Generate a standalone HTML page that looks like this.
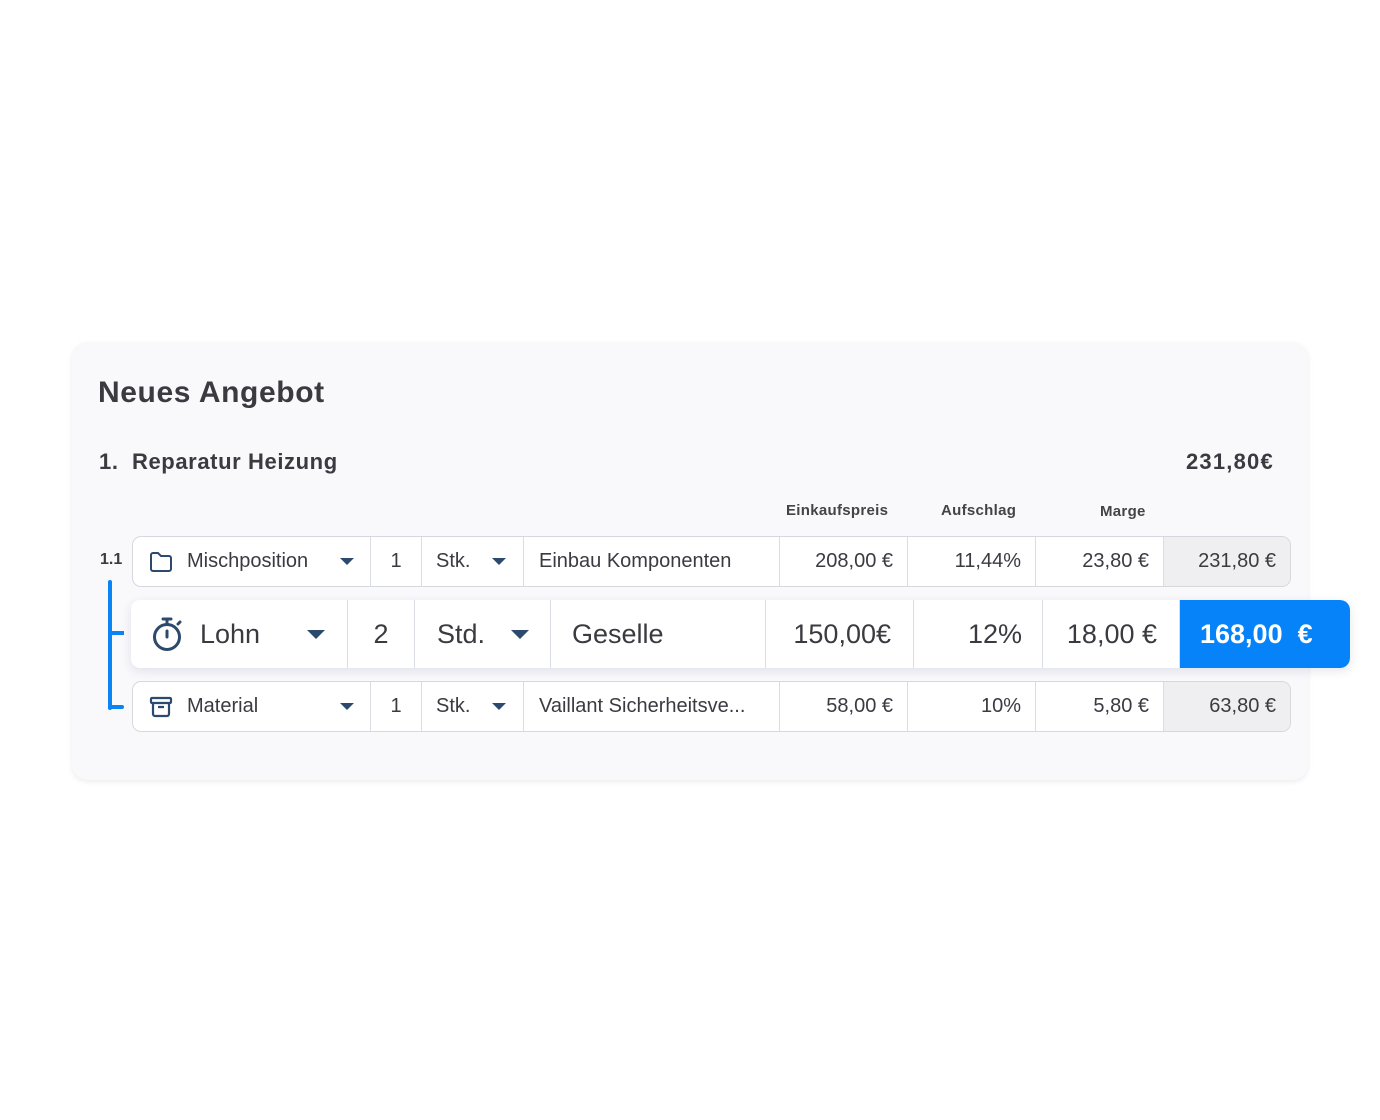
<!DOCTYPE html>
<html><head><meta charset="utf-8"><style>
*{box-sizing:border-box;margin:0;padding:0}
body{width:1380px;height:1120px;background:#fff;font-family:"Liberation Sans",sans-serif;color:#3a3a40;position:relative;overflow:hidden}
.card{position:absolute;left:72px;top:342px;width:1236px;height:438px;background:#f9f9fc;border-radius:16px;box-shadow:0 2px 6px rgba(0,0,0,.08)}
.abs{position:absolute;white-space:nowrap}
.row{position:absolute;display:flex;background:#fff;border:1px solid #d6d8e0;border-radius:9px;overflow:hidden}
.row>div{border-right:1px solid #dcdde4;display:flex;align-items:center;height:100%;position:relative}
.row>div:last-child{border-right:none}
.r{justify-content:flex-end;padding-right:14px}
.tri{position:absolute;width:0;height:0;border-left:7px solid transparent;border-right:7px solid transparent;border-top:7px solid #2c4a6e}
</style></head><body>
<div class="card"></div>
<div class="abs" style="left:98px;top:376px;font-size:30px;font-weight:bold;color:#3a3a40;letter-spacing:0.6px">Neues Angebot</div>
<div class="abs" style="left:99px;top:449px;font-size:22px;font-weight:bold;letter-spacing:0.6px">1.&nbsp; Reparatur Heizung</div>
<div class="abs" style="left:1186px;top:449px;font-size:22px;font-weight:bold;letter-spacing:1.2px">231,80€</div>
<div class="abs" style="left:786px;top:502px;font-size:15px;font-weight:bold;color:#444;letter-spacing:0.3px">Einkaufspreis</div>
<div class="abs" style="left:941px;top:502px;font-size:15px;font-weight:bold;color:#444;letter-spacing:0.3px">Aufschlag</div>
<div class="abs" style="left:1100px;top:503px;font-size:15px;font-weight:bold;color:#444;letter-spacing:0.3px">Marge</div>
<div class="abs" style="left:100px;top:551px;font-size:16px;font-weight:bold">1.1</div>
<div class="abs" style="left:108px;top:580px;width:4px;height:130px;background:#0a84f5;border-radius:2px"></div>
<div class="abs" style="left:108px;top:631px;width:16px;height:4px;background:#0a84f5"></div>
<div class="abs" style="left:108px;top:705px;width:16px;height:4px;background:#0a84f5;border-radius:2px"></div>

<div class="row" style="left:132px;top:536px;width:1159px;height:51px;font-size:20px">
<div style="width:238px;padding-left:16px"><svg width="24" height="22" viewBox="0 0 24 22" fill="none" stroke="#2c4a6e" stroke-width="2"><path d="M2 4a2 2 0 0 1 2-2h5l3 3h8a2 2 0 0 1 2 2v11a2 2 0 0 1-2 2H4a2 2 0 0 1-2-2z"/></svg><span style="margin-left:14px">Mischposition</span><i class="tri" style="left:207px;top:21px"></i></div>
<div style="width:51px;justify-content:center">1</div>
<div style="width:102px;padding-left:14px">Stk.<i class="tri" style="left:70px;top:21px"></i></div>
<div style="width:256px;padding-left:15px">Einbau Komponenten</div>
<div class="r" style="width:128px">208,00 €</div>
<div class="r" style="width:128px">11,44%</div>
<div class="r" style="width:128px">23,80 €</div>
<div class="r" style="flex:1;background:#efeff2">231,80 €</div>
</div>

<div class="row" style="left:131px;top:600px;width:1219px;height:68px;font-size:27px;border:none;box-shadow:0 3px 10px rgba(40,50,90,.12)">
<div style="width:217px;padding-left:20px"><svg width="34" height="36" viewBox="0 0 34 36" fill="none" stroke="#2c4a6e" stroke-width="3" stroke-linecap="round"><circle cx="16" cy="21" r="12.5"/><path d="M16 15v6M12 3h8M16 3v5M27 8l2-2"/></svg><span style="margin-left:15px">Lohn</span><i class="tri" style="left:176px;top:30px;border-width:9px 9px 0 9px"></i></div>
<div style="width:67px;justify-content:center">2</div>
<div style="width:136px;padding-left:22px">Std.<i class="tri" style="left:96px;top:30px;border-width:9px 9px 0 9px"></i></div>
<div style="width:215px;padding-left:21px">Geselle</div>
<div class="r" style="width:148px;padding-right:22px">150,00€</div>
<div class="r" style="width:129px;padding-right:20px">12%</div>
<div class="r" style="width:137px;padding-right:22px">18,00 €</div>
<div style="flex:1;background:#0683f9;color:#fff;font-weight:bold;padding-left:20px;border-radius:0 10px 10px 0">168,00&nbsp;&nbsp;€</div>
</div>

<div class="row" style="left:132px;top:681px;width:1159px;height:51px;font-size:20px">
<div style="width:238px;padding-left:16px"><svg width="24" height="22" viewBox="0 0 24 22" fill="none" stroke="#2c4a6e" stroke-width="2.2"><rect x="2" y="2" width="20" height="5" rx="1"/><path d="M4 7v11a2 2 0 0 0 2 2h12a2 2 0 0 0 2-2V7M9 11h6"/></svg><span style="margin-left:14px">Material</span><i class="tri" style="left:207px;top:21px"></i></div>
<div style="width:51px;justify-content:center">1</div>
<div style="width:102px;padding-left:14px">Stk.<i class="tri" style="left:70px;top:21px"></i></div>
<div style="width:256px;padding-left:15px">Vaillant Sicherheitsve...</div>
<div class="r" style="width:128px">58,00 €</div>
<div class="r" style="width:128px">10%</div>
<div class="r" style="width:128px">5,80 €</div>
<div class="r" style="flex:1;background:#efeff2">63,80 €</div>
</div>
</body></html>
